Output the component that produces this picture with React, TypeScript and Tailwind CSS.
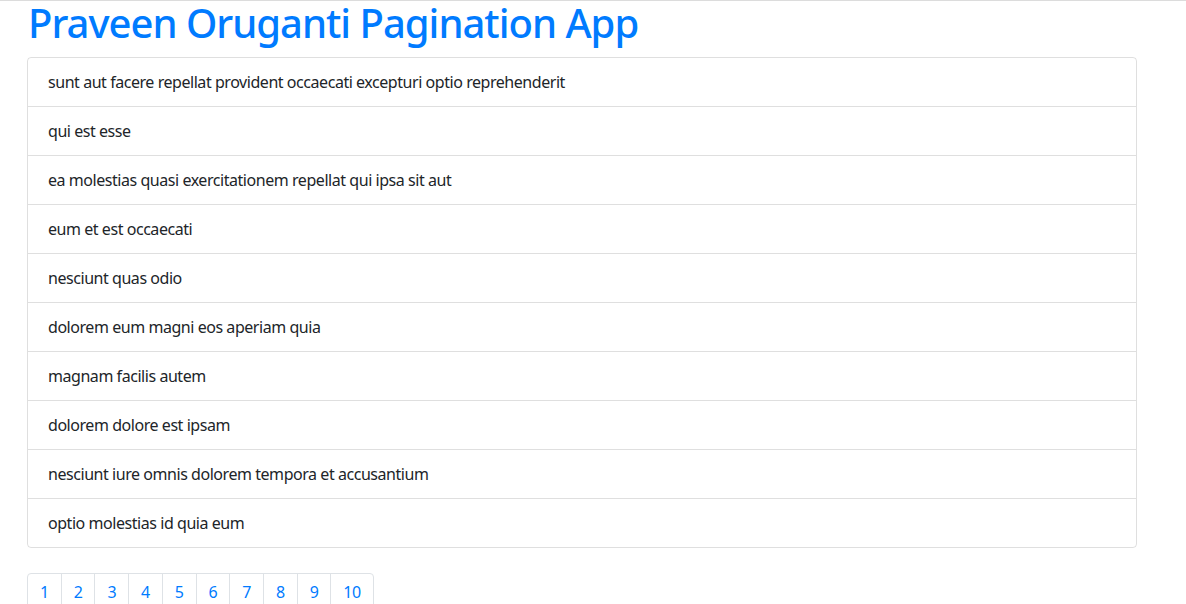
const posts = [
  'sunt aut facere repellat provident occaecati excepturi optio reprehenderit',
  'qui est esse',
  'ea molestias quasi exercitationem repellat qui ipsa sit aut',
  'eum et est occaecati',
  'nesciunt quas odio',
  'dolorem eum magni eos aperiam quia',
  'magnam facilis autem',
  'dolorem dolore est ipsam',
  'nesciunt iure omnis dolorem tempora et accusantium',
  'optio molestias id quia eum',
];

const pages = [1, 2, 3, 4, 5, 6, 7, 8, 9, 10];

export default function App() {
  return (
    <div className="min-h-[604px] bg-white border-t border-[#dcdcdc] font-['Noto_Sans',sans-serif] text-[#212529] tracking-[-0.45px]">
      <div className="ml-[27px] w-[1110px]">
        <h1 className="text-[40px] leading-[44px] font-medium text-[#007bff] pl-[1px] tracking-[-1px]">
          Praveen Oruganti Pagination App
        </h1>
        <ul className="mt-[12px] border border-[rgba(0,0,0,0.125)] rounded">
          {posts.map((p, i) => (
            <li
              key={i}
              className={`px-5 py-3 text-base leading-6 ${i > 0 ? 'border-t border-[rgba(0,0,0,0.125)]' : ''}`}
            >
              {p}
            </li>
          ))}
        </ul>
        <ul className="mt-[25px] inline-flex border border-[#dee2e6] rounded">
          {pages.map((n) => (
            <li key={n} className={n > 1 ? 'border-l border-[#dee2e6]' : ''}>
              <a className="block px-3 py-2 text-base leading-5 text-[#007bff]">{n}</a>
            </li>
          ))}
        </ul>
      </div>
    </div>
  );
}
